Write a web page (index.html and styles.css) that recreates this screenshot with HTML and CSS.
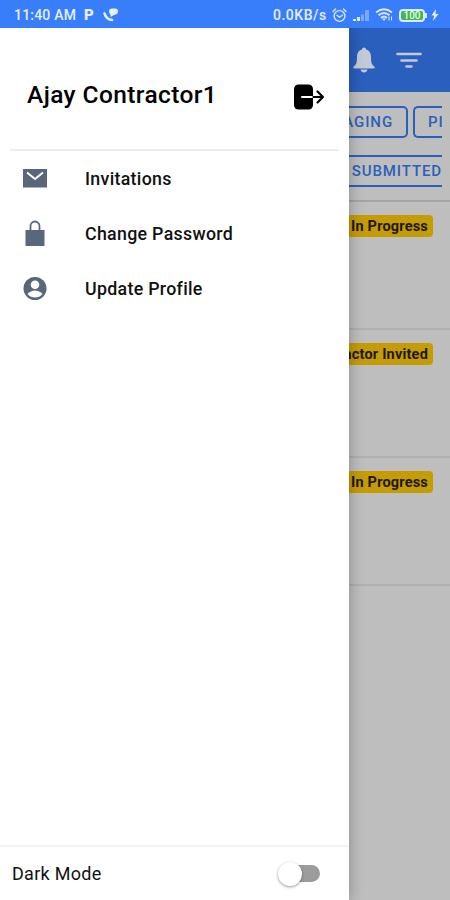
FILE: index.html
```html
<!DOCTYPE html>
<html lang="en">
<head>
  <meta charset="UTF-8">
  <meta name="viewport" content="width=device-width, initial-scale=1.0">
  <title>Menu</title>
  <link rel="stylesheet" href="styles.css">
</head>
<body>
  <!-- Status bar -->
  <header class="status-bar">
    <span class="clock">11:40 AM</span>
    <span class="parking">P</span>
    <svg class="call" width="16" height="14" viewBox="0 0 16 14">
      <path d="M1.500 5.500C2.500 9 5 11.500 9 12" fill="none" stroke="#e6efff" stroke-width="2.600" stroke-linecap="round"/>
      <path d="M6 3.500Q6 .5 9 .5h3Q15 .5 15 3.500 15 6.500 11 7L7.500 9V6.500Q6 5.500 6 3.500z" fill="#e6efff"/>
    </svg>
    <span class="speed">0.0KB/s</span>
    <svg class="alarm" width="15" height="15" viewBox="0 0 15 15" fill="none" stroke="#dce8ff" stroke-width="1.400" stroke-linecap="round">
      <circle cx="7.500" cy="8" r="5.400"/>
      <path d="M1 3.500L3.500 1M14 3.500L11.500 1M5 7.200l2.500 2 2.800-2"/>
    </svg>
    <svg class="signal" width="18" height="13" viewBox="0 0 18 13">
      <path d="M1 10h3v2H1zM5 8h3v4H5z" fill="#dce8ff"/>
      <path d="M9 5.500h3V12H9zM13 1h4v11h-4z" fill="#79a8fc"/>
    </svg>
    <svg class="wifi" width="18" height="14" viewBox="0 0 18 14" fill="none" stroke="#dce8ff" stroke-width="1.900">
      <path d="M1 4.500Q9-1.800 17 4.500M3.500 7.300Q9 2.700 14.500 7.300M6 10Q9 7.200 12 10"/>
      <path d="M7 10.500h4L9 13z" fill="#dce8ff" stroke="none"/>
      <path d="M14 8.500v4M16.500 8.500v4" stroke-width="1"/>
    </svg>
    <span class="battery">100</span>
    <svg class="bolt" width="8" height="12" viewBox="0 0 8 12">
      <path d="M5 0L.5 6.500h2.700L2 12l5.500-7H4.600z" fill="#e6efff"/>
    </svg>
  </header>

  <main class="screen">
    <!-- Side menu -->
    <aside class="drawer">
      <div class="drawer-header">
        <h1>Ajay Contractor1</h1>
        <svg class="logout" width="32" height="28" viewBox="0 0 32 28">
          <rect x="1" y="1.500" width="19" height="25" rx="4.500" fill="#000"/>
          <path d="M9 14h11.500" stroke="#fff" stroke-width="2" stroke-linecap="round"/>
          <path d="M20.500 14H30M24.500 8.500L30 14l-5.500 5.500" fill="none" stroke="#000" stroke-width="2.200" stroke-linecap="round" stroke-linejoin="round"/>
        </svg>
      </div>
      <nav class="menu">
        <a class="menu-item">
          <svg width="26" height="28" viewBox="0 0 26 28">
            <path d="M1 4h24v18.500H1z" fill="#58677c"/>
            <path d="M5 7.500l8 6.500 8-6.500" fill="none" stroke="#fff" stroke-width="2"/>
          </svg>
          <span>Invitations</span>
        </a>
        <a class="menu-item">
          <svg width="26" height="28" viewBox="0 0 26 28">
            <path d="M8.500 12V6a4.500 4.500 0 0 1 9 0V12" fill="none" stroke="#58677c" stroke-width="1.800"/>
            <path d="M3.500 10h19v16h-19z" fill="#58677c"/>
          </svg>
          <span>Change Password</span>
        </a>
        <a class="menu-item">
          <svg width="26" height="28" viewBox="0 0 26 28">
            <circle cx="13" cy="13.500" r="11.500" fill="#58677c"/>
            <circle cx="13" cy="9.800" r="4.300" fill="#fff"/>
            <path d="M5.500 19Q8.500 15.500 13 15.500t7.500 3.500Q17.500 22.500 13 22.500t-7.500-3.500z" fill="#fff"/>
          </svg>
          <span>Update Profile</span>
        </a>
      </nav>
      <div class="drawer-footer">
        <span>Dark Mode</span>
        <span class="toggle"></span>
      </div>
    </aside>

    <!-- Page behind the menu -->
    <section class="page">
      <div class="toolbar">
        <svg width="24" height="28" viewBox="0 0 24 28" fill="#c3cad6">
          <path d="M12 1.500c1.300 0 1.900.8 2 2 3.600.9 5 3.800 5 7.500 0 6 .8 7.500 3.300 9.500.9.800.4 2-.7 2H2.400c-1.100 0-1.600-1.200-.7-2C4.200 18.500 5 17 5 11c0-3.700 1.400-6.600 5-7.500.1-1.200.7-2 2-2zM8.500 23.500h7c-.4 1.800-1.600 3-3.500 3s-3.100-1.200-3.500-3z"/>
        </svg>
        <svg width="26" height="18" viewBox="0 0 26 18" fill="none" stroke="#c3cad6" stroke-width="2.600" stroke-linecap="round">
          <path d="M1.500 3h23M5.500 9.500h15M10.500 15.500h5"/>
        </svg>
      </div>
      <div class="filters">
        <div class="chips">
          <span class="chip">PACKAGING</span>
          <span class="chip cut">PI</span>
        </div>
        <div class="chips">
          <span class="chip wide">SUBMITTED</span>
        </div>
      </div>
      <div class="row"><span class="badge">In Progress</span></div>
      <div class="row"><span class="badge">Contractor Invited</span></div>
      <div class="row"><span class="badge">In Progress</span></div>
    </section>
  </main>
</body>
</html>
```
FILE: styles.css
```css
body {
  margin: 0;
  width: 450px;
  height: 900px;
  display: flex;
  flex-direction: column;
  overflow: hidden;
  font-family: Roboto, "Liberation Sans", sans-serif;
  background: #fff;
}

svg {
  display: block;
  flex: none;
}

/* Status bar */
.status-bar {
  height: 28px;
  flex: none;
  box-sizing: border-box;
  display: flex;
  align-items: center;
  padding: 2px 11px 0 14px;
  background: #387efb;
  color: #e6efff;
}

.clock {
  width: 70px;
  font-size: 14px;
  font-weight: 500;
  letter-spacing: 0.2px;
  white-space: nowrap;
}

.parking {
  width: 19px;
  font-size: 15px;
  font-weight: 900;
}

.speed {
  width: 59px;
  margin-left: auto;
  font-size: 14px;
  font-weight: 500;
  letter-spacing: 0.5px;
}

.signal {
  margin-left: 5px;
}

.wifi {
  margin-left: 5px;
}

.battery {
  position: relative;
  box-sizing: border-box;
  width: 26px;
  height: 13px;
  margin-left: 6px;
  border: 2px solid #dce8ff;
  border-radius: 4px;
  background: #43b649;
  color: #e8ffe8;
  font-size: 10px;
  font-weight: 500;
  line-height: 9px;
  text-align: center;
}

.battery::after {
  content: "";
  position: absolute;
  right: -4px;
  top: 2px;
  width: 2px;
  height: 5px;
  background: #dce8ff;
}

.bolt {
  margin-left: 6px;
}

/* Layout */
.screen {
  flex: 1;
  min-height: 0;
  display: grid;
  grid-template-columns: 348.5px 1fr;
}

.drawer {
  display: flex;
  flex-direction: column;
  z-index: 1;
  background: #fff;
  box-shadow: 0 0 14px rgba(0, 0, 0, 0.3);
  clip-path: inset(0 -20px 0 0);
}

.drawer-header {
  height: 123px;
  box-sizing: border-box;
  display: flex;
  justify-content: space-between;
  align-items: center;
  margin: 0 10px;
  padding: 17px 14px 0 17px;
  border-bottom: 2px solid #ededed;
}

.drawer-header h1 {
  margin: -5px 0 0;
  font-size: 24.5px;
  font-weight: 500;
  letter-spacing: 0.4px;
  color: #000;
}

.menu-item {
  display: flex;
  align-items: center;
  gap: 37px;
  height: 55px;
  padding-left: 22px;
  font-size: 17.8px;
  font-weight: 500;
  letter-spacing: 0.3px;
  color: #111;
}

.drawer-footer {
  height: 55px;
  box-sizing: border-box;
  display: flex;
  align-items: center;
  justify-content: space-between;
  margin-top: auto;
  padding: 0 29px 0 12px;
  border-top: 2px solid #f4f4f4;
  font-size: 18px;
  letter-spacing: 0.3px;
  color: #111;
}

.toggle {
  position: relative;
  width: 36px;
  height: 17px;
  border-radius: 9px;
  background: #9c9c9c;
}

.toggle::before {
  content: "";
  position: absolute;
  left: -6px;
  top: -3px;
  width: 24px;
  height: 24px;
  border-radius: 50%;
  background: #fff;
  box-shadow: 0 1px 3px rgba(0, 0, 0, 0.4);
}

/* Page */
.page {
  min-width: 0;
  overflow: hidden;
  background: #bebebe;
}

.toolbar {
  height: 64px;
  display: flex;
  align-items: center;
  justify-content: flex-end;
  gap: 20px;
  padding-right: 28px;
  background: #2a5fbd;
}

.filters {
  display: flex;
  flex-direction: column;
  gap: 17px;
  height: 110px;
  box-sizing: border-box;
  padding: 14px 8px 0 0;
  border-bottom: 2px solid #a5a5a5;
}

.chips {
  display: flex;
  justify-content: flex-end;
  gap: 5px;
  overflow: hidden;
}

.chip {
  height: 32px;
  flex: none;
  box-sizing: border-box;
  padding: 0 13px;
  border: 2px solid #2a5fbd;
  border-radius: 5px;
  color: #2a5fbd;
  font-size: 15px;
  font-weight: 500;
  line-height: 28px;
  letter-spacing: 0.9px;
}

.chip.cut {
  width: 29px;
  padding-right: 0;
  border-right: 0;
  border-radius: 5px 0 0 5px;
  overflow: hidden;
}

.chip.wide {
  padding-right: 0;
  border-right: 0;
  border-radius: 5px 0 0 5px;
}

.row {
  display: flex;
  justify-content: flex-end;
  align-items: flex-start;
  height: 128px;
  box-sizing: border-box;
  padding: 13px 17px 0 0;
  border-bottom: 2px solid #b1b1b1;
}

.row:first-of-type {
  height: 127px;
}

.badge {
  flex: none;
  height: 22px;
  padding: 0 5px;
  border-radius: 4px;
  background: #c69c04;
  color: #1c1804;
  font-size: 14.5px;
  font-weight: 700;
  line-height: 23px;
  letter-spacing: 0.2px;
}
```
